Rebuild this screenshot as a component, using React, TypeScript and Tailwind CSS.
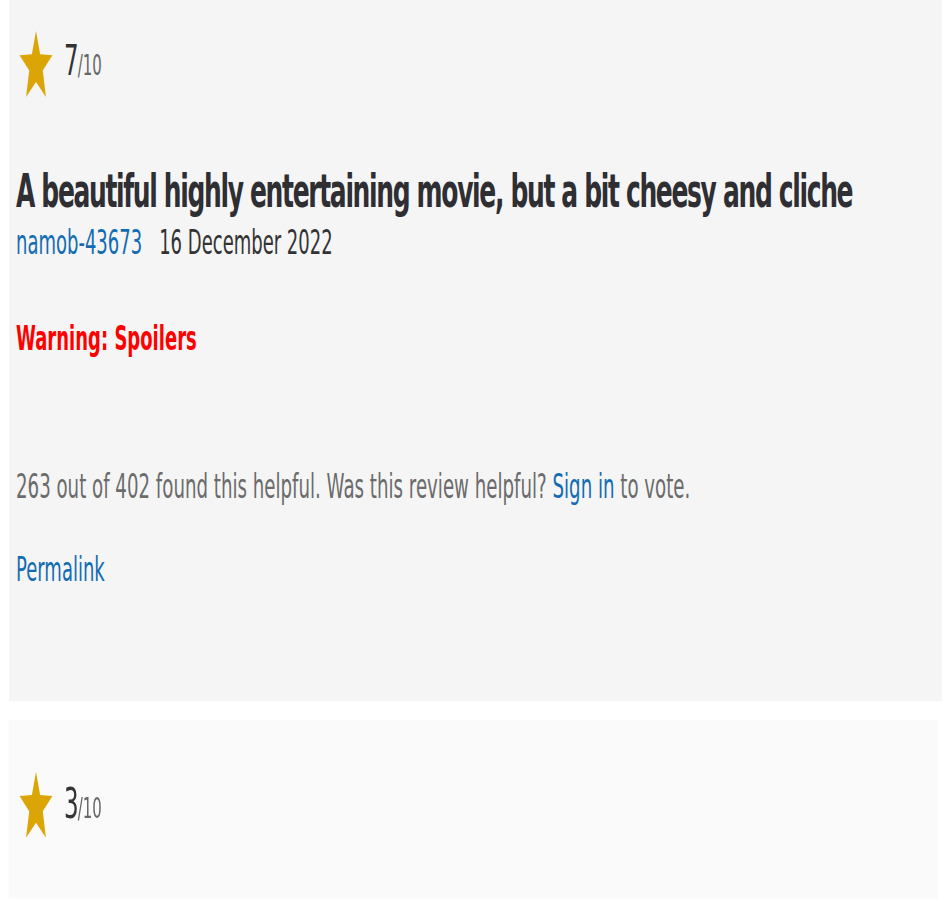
import React from 'react';

const Star: React.FC = () => (
    <svg viewBox="0 0 24 24" preserveAspectRatio="none" className="w-[34px] h-[36px] shrink-0 ml-[3px]">
        <polygon
            points="12,0.3 14.9,8.6 23.6,8.9 16.8,14.3 19,23.7 12,18.4 5,23.7 7.2,14.3 0.4,8.9 9.1,8.6"
            fill="#dba506"
        />
    </svg>
);

const Rating: React.FC<{ value: number }> = ({ value }) => (
    <div className="flex items-center gap-[11px]">
        <Star />
        <span className="leading-[24px] text-[#333]">
            <span className="text-[23px] tracking-[-1px]">{value}</span>
            <span className="text-[15px] text-[#666]">/10</span>
        </span>
    </div>
);

const App: React.FC = () => {
    return (
        <div className="w-full h-[920px] bg-white overflow-hidden" style={{ fontFamily: '"DejaVu Sans", Verdana, sans-serif' }}>
            {/* the whole screenshot is stretched tall, so the page is drawn flat and scaled */}
            <div className="origin-top scale-y-[1.88] h-[490px]">
                {/* Review 1 */}
                <div className="ml-[9px] w-[933px] h-[373px] bg-[#f5f5f5] pt-[15.5px] pl-[7px] flex flex-col">
                    <Rating value={7} />

                    <h2 className="mt-[35px] text-[25px] leading-[30px] font-bold tracking-[-1.35px] text-[#2e2e33] whitespace-nowrap">
                        A beautiful highly entertaining movie, but a bit cheesy and cliche
                    </h2>

                    <div className="mt-[1px] flex text-[18px] leading-[22px] whitespace-nowrap">
                        <span className="text-[#136cb2]">namob-43673</span>
                        <span className="ml-[17px] text-[#333]">16 December 2022</span>
                    </div>

                    <div className="mt-[29px] text-[18px] leading-[22px] font-bold text-[#ff0000]">
                        Warning: Spoilers
                    </div>

                    <p className="mt-[57px] text-[18.2px] leading-[22px] text-[#6b6b6b] whitespace-nowrap">
                        263 out of 402 found this helpful. Was this review helpful?{' '}
                        <span className="text-[#136cb2]">Sign in</span> to vote.
                    </p>

                    <div className="mt-[22px] text-[18px] leading-[22px] text-[#136cb2]">Permalink</div>
                </div>

                {/* Review 2 */}
                <div className="mt-[9.5px] ml-[9px] w-[929px] h-[95px] bg-[#fafafa] pt-[27.5px] pl-[7px]">
                    <Rating value={3} />
                </div>
            </div>
        </div>
    );
};

export default App;
